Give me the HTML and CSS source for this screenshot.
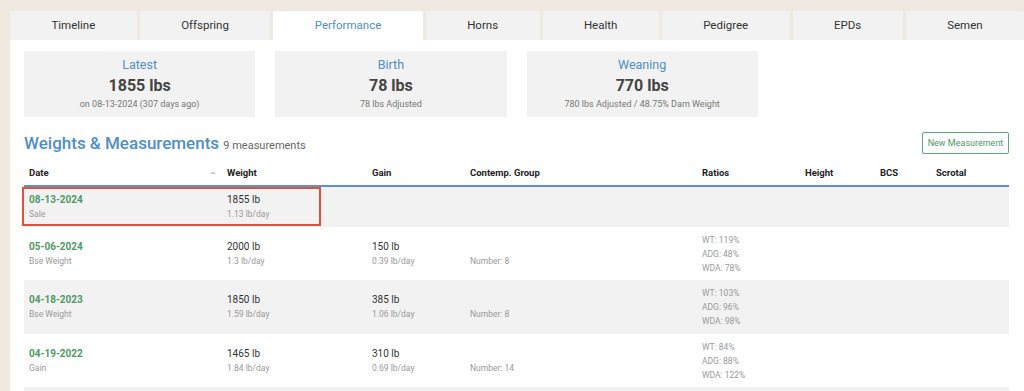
FILE: index.html
```html
<!DOCTYPE html>
<html lang="en">
<head>
<meta charset="utf-8">
<title>Performance</title>
<link rel="stylesheet" href="styles.css">
</head>
<body>
<div class="page">
  <nav class="tabs">
    <div class="tab">Timeline</div>
    <div class="tab">Offspring</div>
    <div class="tab active">Performance</div>
    <div class="tab">Horns</div>
    <div class="tab">Health</div>
    <div class="tab">Pedigree</div>
    <div class="tab">EPDs</div>
    <div class="tab">Semen</div>
  </nav>
  <main class="panel">
    <section class="stats">
      <div class="stat">
        <div class="stat-title">Latest</div>
        <div class="stat-value">1855 lbs</div>
        <div class="stat-sub">on 08-13-2024 (307 days ago)</div>
      </div>
      <div class="stat">
        <div class="stat-title">Birth</div>
        <div class="stat-value">78 lbs</div>
        <div class="stat-sub">78 lbs Adjusted</div>
      </div>
      <div class="stat">
        <div class="stat-title">Weaning</div>
        <div class="stat-value">770 lbs</div>
        <div class="stat-sub">780 lbs Adjusted / 48.75% Dam Weight</div>
      </div>
    </section>

    <header class="section-head">
      <h2 class="section-title">Weights &amp; Measurements <span class="count">9 measurements</span></h2>
      <button class="btn-outline">New Measurement</button>
    </header>

    <div class="table-wrap">
      <table class="grid">
        <colgroup>
          <col class="c-date"><col class="c-weight"><col class="c-gain"><col class="c-group">
          <col class="c-ratios"><col class="c-height"><col class="c-bcs"><col class="c-scrotal">
        </colgroup>
        <thead>
          <tr>
            <th><span class="sort"></span>Date</th>
            <th>Weight</th>
            <th>Gain</th>
            <th>Contemp. Group</th>
            <th>Ratios</th>
            <th>Height</th>
            <th>BCS</th>
            <th>Scrotal</th>
          </tr>
        </thead>
        <tbody>
          <tr>
            <td><div class="date">08-13-2024</div><div class="sub">Sale</div></td>
            <td><div class="val">1855 lb</div><div class="sub">1.13 lb/day</div></td>
            <td></td><td></td><td></td><td></td><td></td><td></td>
          </tr>
          <tr>
            <td><div class="date">05-06-2024</div><div class="sub">Bse Weight</div></td>
            <td><div class="val">2000 lb</div><div class="sub">1.3 lb/day</div></td>
            <td><div class="val">150 lb</div><div class="sub">0.39 lb/day</div></td>
            <td><div class="val">&nbsp;</div><div class="sub">Number: 8</div></td>
            <td><div class="ratio">WT: 119%</div><div class="ratio">ADG: 48%</div><div class="ratio">WDA: 78%</div></td>
            <td></td><td></td><td></td>
          </tr>
          <tr>
            <td><div class="date">04-18-2023</div><div class="sub">Bse Weight</div></td>
            <td><div class="val">1850 lb</div><div class="sub">1.59 lb/day</div></td>
            <td><div class="val">385 lb</div><div class="sub">1.06 lb/day</div></td>
            <td><div class="val">&nbsp;</div><div class="sub">Number: 8</div></td>
            <td><div class="ratio">WT: 103%</div><div class="ratio">ADG: 96%</div><div class="ratio">WDA: 98%</div></td>
            <td></td><td></td><td></td>
          </tr>
          <tr>
            <td><div class="date">04-19-2022</div><div class="sub">Gain</div></td>
            <td><div class="val">1465 lb</div><div class="sub">1.84 lb/day</div></td>
            <td><div class="val">310 lb</div><div class="sub">0.69 lb/day</div></td>
            <td><div class="val">&nbsp;</div><div class="sub">Number: 14</div></td>
            <td><div class="ratio">WT: 84%</div><div class="ratio">ADG: 88%</div><div class="ratio">WDA: 122%</div></td>
            <td></td><td></td><td></td>
          </tr>
          <tr>
            <td><div class="date">&nbsp;</div><div class="sub">&nbsp;</div></td>
            <td></td><td></td><td></td><td></td><td></td><td></td><td></td>
          </tr>
        </tbody>
      </table>
      <div class="highlight"></div>
    </div>
  </main>
</div>
</body>
</html>
```

FILE: styles.css
```css
* { box-sizing: border-box; }

html, body {
  margin: 0;
  background: #efe9df;
  font-family: Roboto, "Liberation Sans", Arial, sans-serif;
  color: #333;
}

.page {
  padding: 11px 0 0 10px;
}

.tabs {
  display: flex;
  gap: 3px;
}

.tab {
  flex: 1 1 auto;
  height: 29px;
  line-height: 29px;
  padding: 0 10px;
  text-align: center;
  font-size: 11.5px;
  color: #333;
  background: #f2f2f2;
  border-radius: 2px 2px 0 0;
  white-space: nowrap;
}

.tab.active {
  background: #fff;
  color: #4f8ec6;
}

.panel {
  background: #fff;
  padding: 11px 15px 0 14px;
}

.stats {
  display: grid;
  grid-template-columns: repeat(4, 1fr);
  gap: 20px;
}

.stat {
  height: 66px;
  background: #f2f2f2;
  text-align: center;
  padding-top: 6px;
}

.stat-title {
  font-size: 12.5px;
  line-height: 16px;
  color: #4f8ec6;
}

.stat-value {
  margin-top: 2px;
  font-size: 16px;
  line-height: 22px;
  font-weight: 700;
  color: #444;
}

.stat-sub {
  margin-top: 1px;
  font-size: 9px;
  line-height: 12px;
  color: #777;
}

.section-head {
  display: flex;
  justify-content: space-between;
  align-items: center;
  margin-top: 15px;
  height: 22px;
}

.section-title {
  margin: 0;
  padding-top: 2px;
  font-size: 17px;
  font-weight: 500;
  color: #4f8ec6;
  line-height: 22px;
}

.count {
  font-size: 11px;
  font-weight: 400;
  color: #666;
}

.btn-outline {
  height: 22px;
  width: 87px;
  padding: 0;
  background: #fff;
  border: 1.5px solid #5fa773;
  border-radius: 2px;
  color: #4e9a62;
  font-family: inherit;
  font-size: 9px;
}

.table-wrap {
  position: relative;
  margin-top: 6px;
}

.grid {
  width: 100%;
  border-collapse: collapse;
  table-layout: fixed;
}

.c-date { width: 198px; }
.c-weight { width: 145px; }
.c-gain { width: 98px; }
.c-group { width: 232px; }
.c-ratios { width: 103px; }
.c-height { width: 75px; }
.c-bcs { width: 56px; }
.c-scrotal { width: 78px; }

.grid th {
  height: 26px;
  padding: 0 0 0 5px;
  text-align: left;
  font-size: 9.5px;
  font-weight: 700;
  color: #222;
  border-bottom: 2px solid #5b93c6;
  vertical-align: middle;
}

.sort {
  float: right;
  margin: 4px 6px 0 0;
  width: 0;
  height: 0;
  border-left: 3.5px solid transparent;
  border-right: 3.5px solid transparent;
  border-bottom: 3.5px solid #cfcfcf;
}

.grid td {
  padding: 6px 0 5.5px 5px;
  vertical-align: middle;
}

.grid tbody tr:nth-child(odd) {
  background: #f2f2f2;
}

.date {
  font-size: 10px;
  line-height: 14px;
  font-weight: 700;
  color: #4e9a62;
}

.val {
  font-size: 10px;
  line-height: 14px;
  color: #333;
}

.sub {
  font-size: 8.5px;
  line-height: 14px;
  color: #999;
}

.ratio {
  font-size: 8.5px;
  line-height: 14px;
  color: #999;
}

.highlight {
  position: absolute;
  left: -2px;
  top: 27px;
  width: 299px;
  height: 39px;
  border: 2px solid #e4513b;
  pointer-events: none;
}
```
